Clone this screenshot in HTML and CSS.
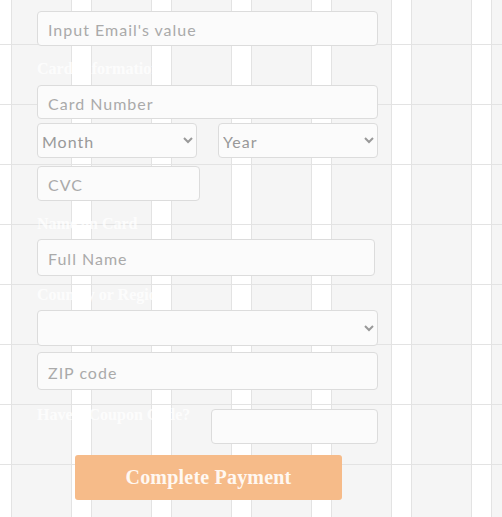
FILE: index.html
```html
<!DOCTYPE html>
<html lang="en">
<head>
<meta charset="utf-8">
<title>Payment</title>
<link rel="stylesheet" href="styles.css">
</head>
<body>
<form class="pay-form">
  <input class="field field-email" type="email" placeholder="Input Email's value">
  <label class="label label-card">Card Information</label>
  <input class="field field-card" type="text" placeholder="Card Number">
  <div class="row-dates">
    <select class="field select">
      <option>Month</option>
    </select>
    <select class="field select">
      <option>Year</option>
    </select>
  </div>
  <input class="field field-cvc" type="text" placeholder="CVC">
  <label class="label label-name">Name on Card</label>
  <input class="field field-name" type="text" placeholder="Full Name">
  <label class="label label-country">Country or Region</label>
  <select class="field select select-country">
    <option></option>
  </select>
  <input class="field field-zip" type="text" placeholder="ZIP code">
  <div class="row-coupon">
    <label class="label label-coupon">Have a Coupon Code?</label>
    <input class="field field-coupon" type="text">
  </div>
  <button class="pay-btn" type="button">Complete Payment</button>
</form>
</body>
</html>
```

FILE: styles.css
```css
html {
  background-color: #fff;
  background-image:
    linear-gradient(to bottom, #e3e3e3 0, #e3e3e3 1px, transparent 1px),
    linear-gradient(to right, #e3e3e3 0, #e3e3e3 1px, #f5f5f5 1px, #f5f5f5 60px, #e3e3e3 60px, #e3e3e3 61px, #fff 61px);
  background-size: 100% 60px, 80px 100%;
  background-position: 0 44px, 11px 0;
  min-height: 100%;
}

body {
  margin: 0;
}

.pay-form {
  display: flex;
  flex-direction: column;
  align-items: flex-start;
  width: 341px;
  padding: 11px 0 0 37px;
}

.field {
  box-sizing: border-box;
  display: block;
  width: 341px;
  height: 35px;
  margin: 0;
  border: 1px solid #dcdcdc;
  border-radius: 4px;
  background-color: #fbfbfb;
  font-family: Lato, "Open Sans", sans-serif;
  font-size: 16px;
  color: #999;
  padding: 2px 10px 0;
  letter-spacing: 1px;
  outline: none;
}

.field::placeholder {
  color: #aaa;
}

.label {
  display: block;
  color: rgba(255, 255, 255, 0.8);
  font-family: "Liberation Serif", "Times New Roman", serif;
  font-weight: bold;
  font-size: 16px;
  line-height: 18px;
}

.label-card {
  margin-top: 14px;
}

.field-card {
  margin-top: 7px;
  height: 34px;
}

.row-dates {
  display: flex;
  justify-content: space-between;
  width: 341px;
  margin-top: 4px;
}

.select {
  width: 160px;
  padding: 2px 0 0;
  color: #999;
}

.field-cvc {
  width: 163px;
  margin-top: 8px;
}

.label-name {
  margin-top: 14px;
}

.field-name {
  width: 338px;
  height: 37px;
  margin-top: 6px;
}

.label-country {
  margin-top: 10px;
}

.select-country {
  width: 341px;
  height: 36px;
  margin-top: 6px;
}

.field-zip {
  height: 38px;
  margin-top: 6px;
}

.row-coupon {
  display: flex;
  justify-content: space-between;
  align-items: flex-start;
  width: 341px;
  margin-top: 16px;
}

.field-coupon {
  width: 167px;
  margin-top: 3px;
}

.pay-btn {
  width: 267px;
  height: 45px;
  margin: 11px 0 0 38px;
  border: none;
  border-radius: 3px;
  background-color: #f6bb89;
  color: #fff8f2;
  font-family: "Liberation Serif", "Times New Roman", serif;
  font-weight: bold;
  font-size: 20px;
  letter-spacing: 0.2px;
  padding: 0;
}
```
